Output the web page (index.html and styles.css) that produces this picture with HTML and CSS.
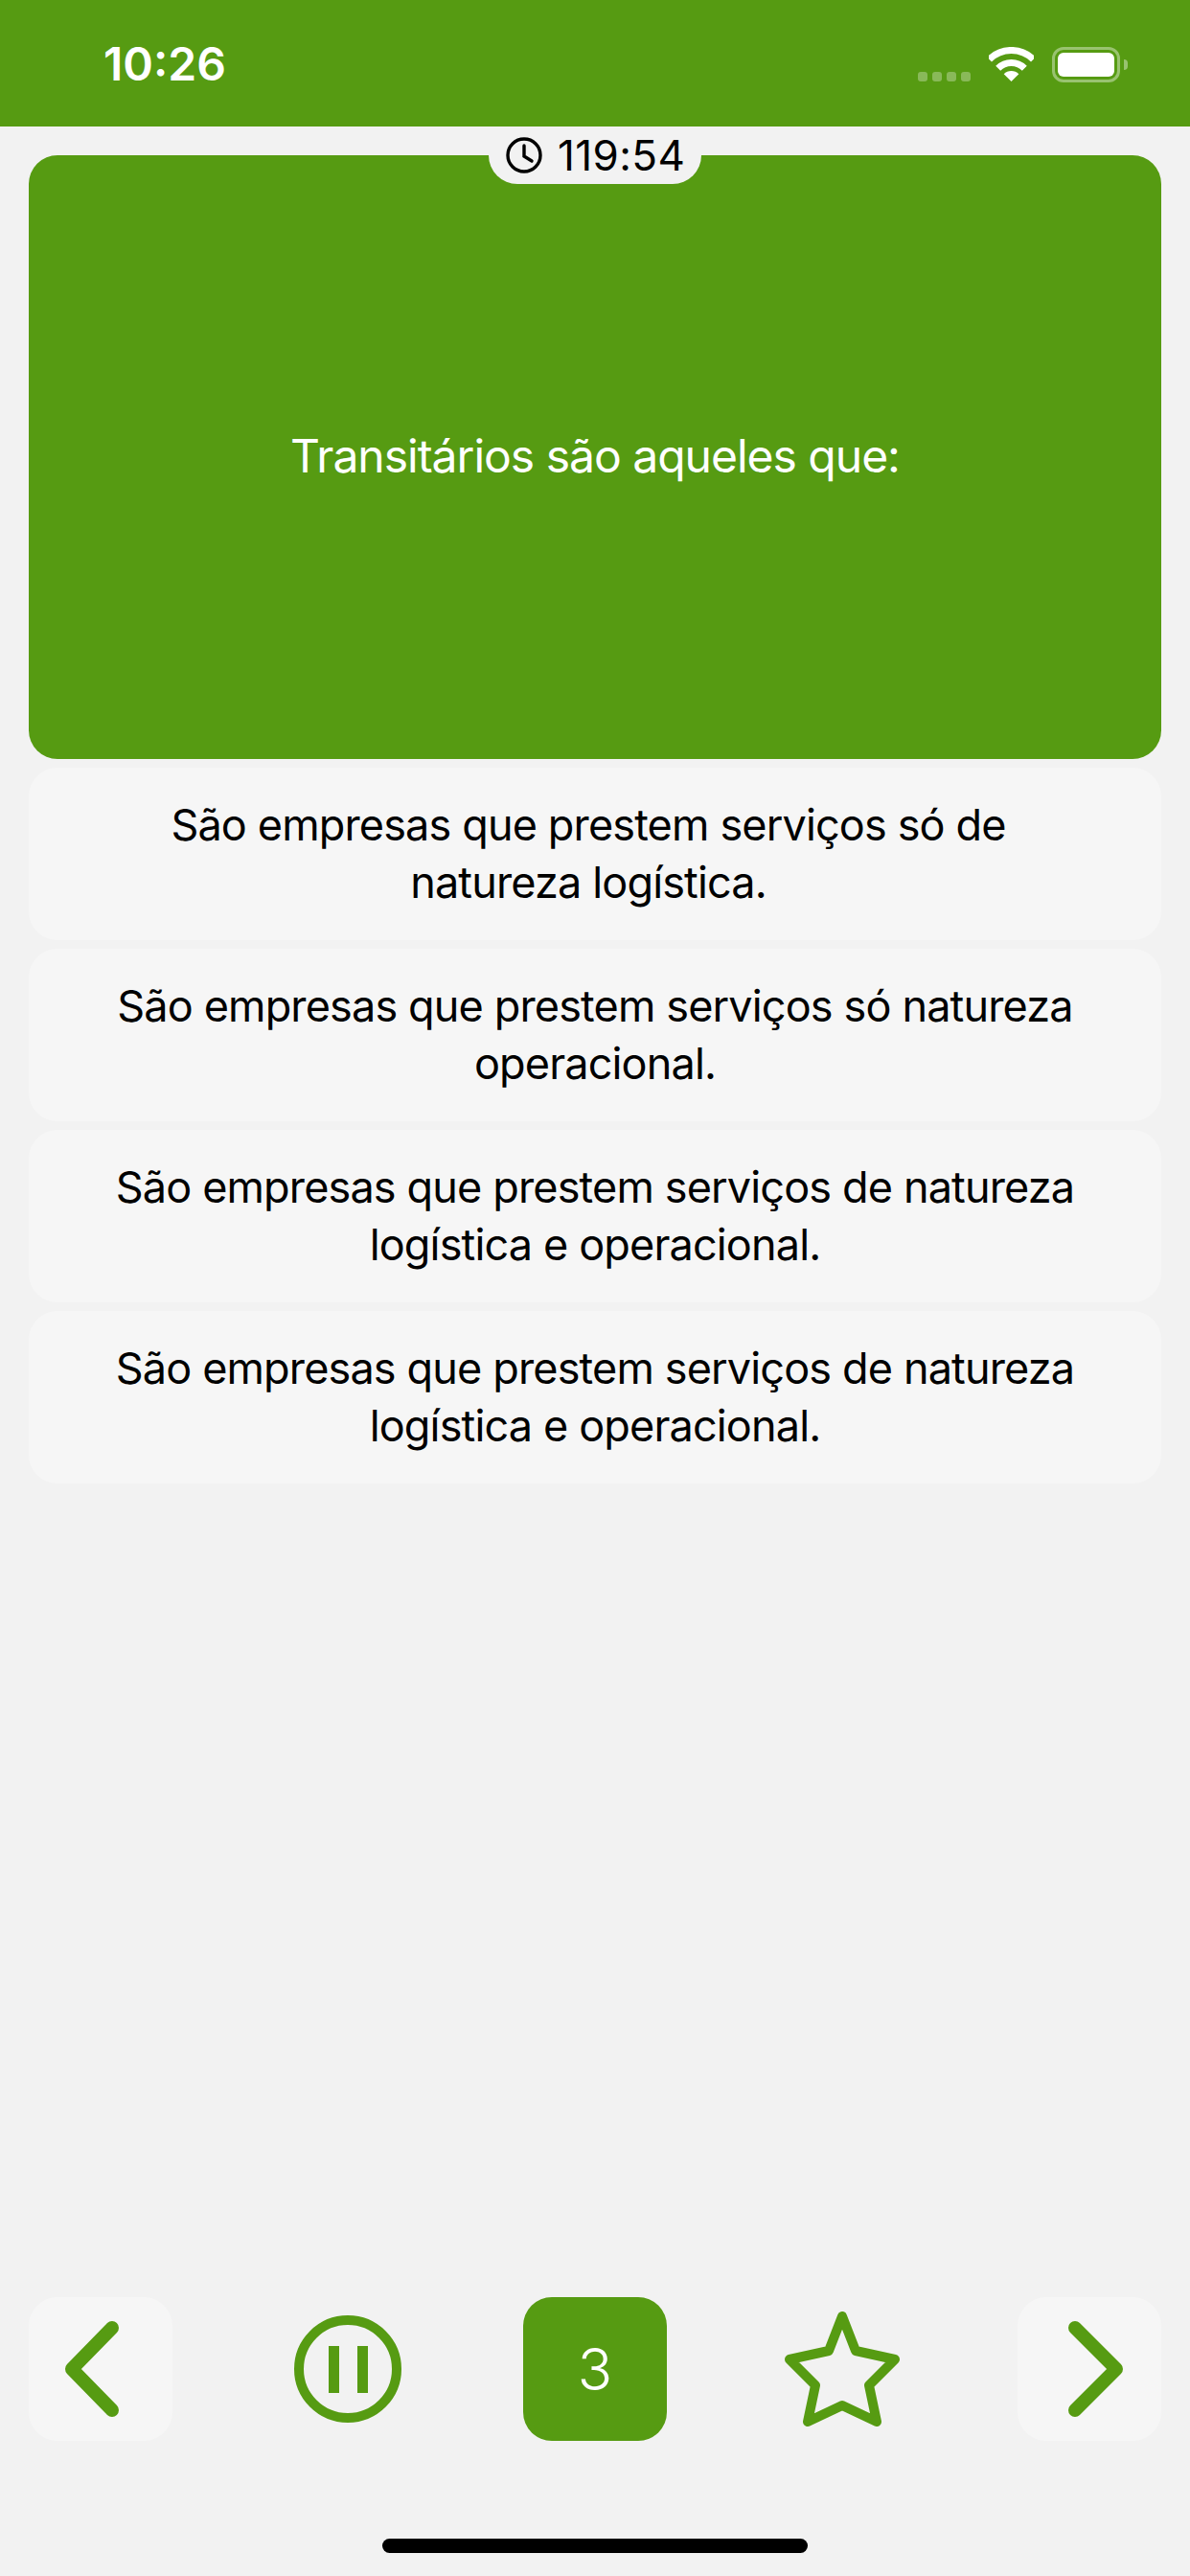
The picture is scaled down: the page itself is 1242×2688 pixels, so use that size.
FILE: index.html
```html
<!DOCTYPE html>
<html lang="pt">
<head>
  <meta charset="UTF-8">
  <meta name="viewport" content="width=device-width, initial-scale=1.0">
  <title>Simulado</title>
  <link rel="stylesheet" href="styles.css">
</head>
<body>
  <div class="screen">
    <!-- Status bar -->
    <header class="status">
      <span class="status__time">10:26</span>
      <div class="status__icons">
        <div class="status__signal"><i></i><i></i><i></i><i></i></div>
        <svg class="status__wifi" width="47" height="36" viewBox="0 0 47 36" fill="none" stroke="#fff">
          <path d="M0.5 13 A32.5 32.5 0 0 1 46.5 13" stroke-width="7"/>
          <path d="M9.7 22.2 A19.5 19.5 0 0 1 37.3 22.2" stroke-width="7"/>
          <path d="M15.7 28.2 A11 11 0 0 1 31.3 28.2 L23.5 36 Z" fill="#fff" stroke="none"/>
        </svg>
        <div class="status__battery"><div class="status__charge"></div></div>
      </div>
    </header>

    <main class="quiz">
      <section class="question">
        <div class="timer">
          <svg width="38" height="38" viewBox="0 0 38 38" fill="none" stroke="#000" stroke-width="3.4" stroke-linecap="round">
            <circle cx="19" cy="19" r="17"/>
            <path d="M19 9 V20 L27 25"/>
          </svg>
          <span>119:54</span>
        </div>
        <p class="question__text">Transitários são aqueles que:</p>
      </section>

      <ul class="answers">
        <li class="answer answer--first">São empresas que prestem serviços só de natureza logística.</li>
        <li class="answer">São empresas que prestem serviços só natureza operacional.</li>
        <li class="answer">São empresas que prestem serviços de natureza logística e operacional.</li>
        <li class="answer">São empresas que prestem serviços de natureza logística e operacional.</li>
      </ul>
    </main>

    <nav class="toolbar">
      <div class="toolbar__btn toolbar__btn--card">
        <svg width="90" height="112" viewBox="0 0 90 112" fill="none" stroke="#569b12" stroke-width="14" stroke-linecap="round" stroke-linejoin="round">
          <path d="M57 13 L15 56 L57 99"/>
        </svg>
      </div>
      <div class="toolbar__btn">
        <svg width="112" height="112" viewBox="0 0 112 112" fill="none" stroke="#569b12">
          <circle cx="56" cy="56" r="51" stroke-width="10"/>
          <path d="M41.5 32 V81 M71.5 32 V81" stroke-width="11"/>
        </svg>
      </div>
      <div class="toolbar__btn toolbar__btn--current">3</div>
      <div class="toolbar__btn">
        <svg width="122" height="120" viewBox="0 0 122 120" fill="none" stroke="#569b12" stroke-width="10" stroke-linejoin="round">
          <path d="M61 5 L75 41 L116 50 L89 77 L97 115 L61 98 L25 115 L33 77 L6 50 L47 41 Z"/>
        </svg>
      </div>
      <div class="toolbar__btn toolbar__btn--card">
        <svg width="90" height="112" viewBox="0 0 90 112" fill="none" stroke="#569b12" stroke-width="14" stroke-linecap="round" stroke-linejoin="round">
          <path d="M30 13 L73 56 L30 99"/>
        </svg>
      </div>
    </nav>

    <div class="home-bar"></div>
  </div>
</body>
</html>
```

FILE: styles.css
```css
/* Reset */
*, *::after, *::before {
  margin: 0;
  padding: 0;
  box-sizing: border-box;
}

body {
  background-color: #f2f2f2;
  font-family: "Inter", "Liberation Sans", sans-serif;
  color: #000;
}

.screen {
  width: 1242px;
  height: 2688px;
  display: flex;
  flex-direction: column;
  overflow: hidden;
}

/* Status bar */
.status {
  height: 132px;
  flex-shrink: 0;
  background-color: #569b12;
  color: #fff;
  display: flex;
  justify-content: space-between;
  padding: 40px 73px 0 108px;
}

.status__time {
  font-size: 48px;
  font-weight: 600;
  line-height: 54px;
}

.status__icons {
  display: flex;
  align-items: flex-end;
  height: 37px;
  margin-top: 9px;
}

.status__signal {
  display: flex;
  gap: 5px;
  margin-right: 19px;
  margin-bottom: 1px;
}

.status__signal i {
  display: block;
  width: 10px;
  height: 10px;
  border-radius: 3px;
  background-color: rgba(255, 255, 255, 0.3);
}

.status__wifi {
  margin-right: 19px;
  margin-bottom: 1px;
}

.status__battery {
  position: relative;
  width: 71px;
  height: 37px;
  padding: 3px;
  border: 3px solid rgba(255, 255, 255, 0.4);
  border-radius: 12px;
}

.status__battery::after {
  content: "";
  position: absolute;
  top: 10px;
  right: -11px;
  width: 4px;
  height: 11px;
  border-radius: 0 4px 4px 0;
  background-color: rgba(255, 255, 255, 0.4);
}

.status__charge {
  height: 100%;
  border-radius: 6px;
  background-color: #fff;
}

/* Question and answers */
.quiz {
  padding: 30px 30px 0;
  flex: 1;
}

.question {
  position: relative;
  height: 630px;
  border-radius: 30px;
  background-color: #569b12;
  display: flex;
  align-items: center;
  justify-content: center;
}

.question__text {
  color: #fff;
  font-size: 48px;
  line-height: 60px;
  letter-spacing: -1px;
  margin-bottom: 3px;
}

.timer {
  position: absolute;
  top: -30px;
  left: 480px;
  width: 222px;
  height: 60px;
  padding-left: 18px;
  border-radius: 0 0 30px 30px;
  background-color: #f2f2f2;
  display: flex;
  align-items: center;
  gap: 16px;
  font-size: 44px;
  letter-spacing: 0.4px;
}

.answers {
  list-style: none;
  margin-top: 9px;
  display: flex;
  flex-direction: column;
  gap: 9px;
}

.answer {
  height: 180px;
  padding: 0 70px;
  border-radius: 30px;
  background-color: #f6f6f6;
  font-size: 45px;
  line-height: 60px;
  letter-spacing: -0.85px;
  text-align: center;
  display: flex;
  align-items: center;
  justify-content: center;
}

.answer--first {
  padding: 0 77px 0 63px;
}

/* Bottom toolbar */
.toolbar {
  display: flex;
  justify-content: space-between;
  padding: 0 30px;
}

.toolbar__btn {
  width: 150px;
  height: 150px;
  border-radius: 30px;
  display: flex;
  align-items: center;
  justify-content: center;
}

.toolbar__btn--card {
  background-color: #f6f6f6;
}

.toolbar__btn--current {
  background-color: #569b12;
  color: #fff;
  font-size: 60px;
  font-weight: 300;
}

.home-bar {
  width: 444px;
  height: 15px;
  flex-shrink: 0;
  margin: 102px auto 24px;
  border-radius: 8px;
  background-color: #000;
}
```
